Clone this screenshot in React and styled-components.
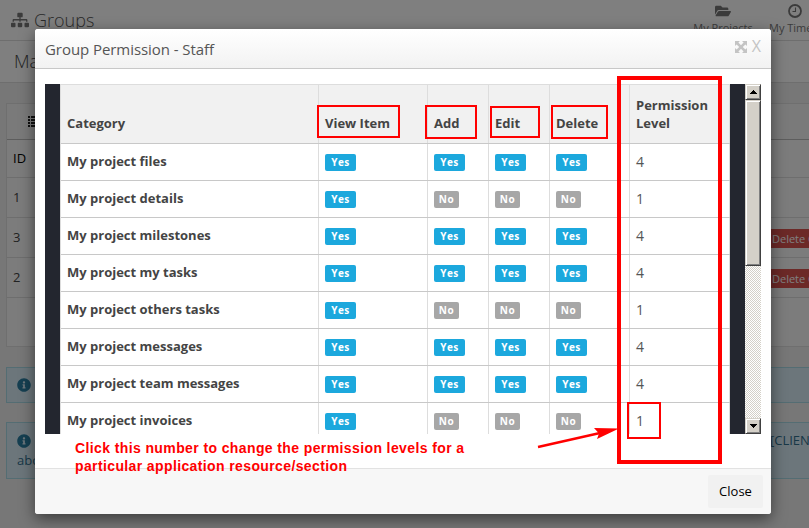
import React from "react";
import styled, { createGlobalStyle } from "styled-components";
import { FaSitemap, FaFolderOpen, FaInfoCircle } from "react-icons/fa";

const Global = createGlobalStyle`
  * { box-sizing: border-box; }
  html, body { margin: 0; overflow: hidden; }
  body { font: 13px/18px "Open Sans", sans-serif; color: #444; }
`;

const Screen = styled.div`
  position: relative;
  width: 809px;
  height: 528px;
  overflow: hidden;
  background: #efefef;
`;

const TopBar = styled.header`
  height: 41px;
  display: flex;
  justify-content: space-between;
  background: #fff;
  border-bottom: 1px solid #dcdcdc;
`;

const PageTitle = styled.div`
  display: flex;
  align-items: center;
  gap: 5px;
  padding-left: 11px;
  font-size: 18px;
  font-weight: 300;
  line-height: 41px;
  color: #555;
  svg { font-size: 18px; fill: #777; }
`;

const Shortcuts = styled.nav`
  display: flex;
  width: 115px;
  gap: 17px;
`;

const Shortcut = styled.div`
  flex: none;
  width: ${(p) => (p.$clock ? 50 : 58)}px;
  display: flex;
  flex-direction: column;
  align-items: ${(p) => (p.$clock ? "flex-start" : "center")};
  padding-top: ${(p) => (p.$clock ? 4 : 3)}px;
  font-size: 11px;
  line-height: 14px;
  color: #777;
  white-space: nowrap;
  svg {
    flex: none;
    font-size: 16px;
    margin: 0 0 ${(p) => (p.$clock ? 3 : 2)}px ${(p) => (p.$clock ? 19 : 0)}px;
  }
`;

const SubBar = styled.div`
  height: 42px;
  padding-left: 14px;
  font-size: 18px;
  font-weight: 300;
  line-height: 41px;
  background: #fff;
  border-bottom: 1px solid #dcdcdc;
`;

const Panel = styled.section`
  margin: 20px 0 0 6px;
  height: 244px;
  background: #f8f8f8;
  border: 1px solid #dedede;
  border-right: 0;
`;

const PanelHead = styled.div`
  height: 36px;
  padding: 12px 0 0 21px;
  line-height: 0;
  background: #f5f5f5;
  border-bottom: 1px solid #bbb;
`;

const PanelRow = styled.div`
  display: flex;
  align-items: center;
  justify-content: space-between;
  height: ${(p) => (p.$head ? 38 : 40)}px;
  padding: 0 0 2px 6px;
  border-bottom: 1px solid #dcdcdc;
  color: ${(p) => (p.$head ? "#000" : "#444")};
`;

const DeleteTag = styled.span`
  width: 40px;
  height: 19px;
  margin-top: 4px;
  padding-left: 3px;
  overflow: hidden;
  font-size: 11px;
  line-height: 19px;
  white-space: nowrap;
  color: #fff;
  background: #d9534f;
`;

const Alert = styled.div`
  display: flex;
  justify-content: space-between;
  margin: ${(p) => (p.$tall ? 19 : 20)}px 0 0 6px;
  height: ${(p) => (p.$tall ? 57 : 36)}px;
  padding: ${(p) => (p.$tall ? 9 : 8)}px 0 0 10px;
  color: #31708f;
  background: #d9edf7;
  border: 1px solid #a9dbe6;
  border-right: 0;
`;

const AlertLead = styled.div`
  display: flex;
  flex-direction: column;
  gap: 2px;
  svg { font-size: 14px; margin: 2px 0 1px; fill: #2a7fa3; }
`;

const AlertTail = styled.span`
  width: 39px;
  margin-top: -1px;
  white-space: nowrap;
`;

const Overlay = styled.div`
  position: absolute;
  inset: 0;
  padding: 29px 0 0 35px;
  background: rgba(0, 0, 0, 0.5);
`;

const Dialog = styled.div`
  display: flex;
  flex-direction: column;
  width: 736px;
  height: 485px;
  overflow: hidden;
  background: #fff;
  border-radius: 3px;
  box-shadow: 0 5px 15px rgba(0, 0, 0, 0.5);
`;

const DialogHead = styled.div`
  display: flex;
  justify-content: space-between;
  height: 40px;
  padding: 0 10px;
  line-height: 41px;
  background: linear-gradient(#fff, #f2f2f2);
  border-bottom: 1px solid #c8c8c8;
`;

const DialogTitle = styled.div`
  font-size: 15px;
  letter-spacing: -0.06px;
  font-weight: 400;
  color: #555;
`;

const WindowTools = styled.div`
  display: flex;
  gap: 5px;
  color: #c4c4c4;
  font-size: 16px;
  line-height: 35px;
  svg { margin: 12px 0 0 -1px; }
`;

const DialogBody = styled.div`
  flex: 1;
  padding: 15px 10px 0;
`;

const Scroller = styled.div`
  display: flex;
  width: 716px;
  height: 350px;
  overflow: hidden;
  background: #23262f;
  padding-left: 15px;
`;

const Grid = styled.div`
  width: 670px;
  margin-right: 15px;
  background: #fff;
  border-left: 1px solid #ddd;
`;

const GridRow = styled.div`
  display: grid;
  grid-template-columns: 258px 109px 61px 61px 80px 100px;
  height: ${(p) => (p.$head ? 60 : 37)}px;
  background: ${(p) => (p.$head ? "#f1f1f1" : "#fff")};
  border-top: ${(p) => (p.$head ? "1px solid #ddd" : "0")};
  border-bottom: 1px solid #c8c8c8;
`;

const Cell = styled.div`
  display: flex;
  align-items: ${(p) => (p.$head ? "flex-end" : "center")};
  padding: ${(p) => (p.$head ? "0 6px 11px" : p.$level ? "0 6px 1px" : "0 6px 3px")};
  font-weight: ${(p) => (p.$strong ? 700 : 400)};
  font-size: ${(p) => (p.$level ? 14 : 13)}px;
  color: ${(p) => (p.$level ? "#555" : "#444")};
  border-right: 1px solid #ddd;
`;

const Badge = styled.span`
  height: 17px;
  min-width: ${(p) => (p.$on ? 31 : 25)}px;
  margin-top: 4px;
  text-align: center;
  border-radius: 2px;
  font: 700 10px/17px "Open Sans", sans-serif;
  letter-spacing: 0.5px;
  color: #fff;
  background: ${(p) => (p.$on ? "#1ca8dd" : "#a7a7a7")};
`;

const ScrollTrack = styled.div`
  display: flex;
  flex-direction: column;
  width: 16px;
  background: repeating-conic-gradient(#d4d0c8 0 25%, #fff 0 50%) 0 0 / 2px 2px;
`;

const ScrollPart = styled.div`
  display: flex;
  align-items: center;
  justify-content: center;
  height: ${(p) => p.$h}px;
  margin-top: ${(p) => (p.$end ? "auto" : 0)};
  background: #d4d0c8;
  border: 1px solid;
  border-color: #d4d0c8 #404040 #404040 #d4d0c8;
  box-shadow: inset 1px 1px #fff, inset -1px -1px #808080;
`;

const DialogFoot = styled.div`
  display: flex;
  justify-content: flex-end;
  height: 46px;
  padding: 6px 8px 0;
  background: #f7f7f7;
  border-top: 1px solid #e2e2e2;
`;

const CloseButton = styled.button`
  width: 55px;
  height: 33px;
  padding: 0 0 1px;
  border: 0;
  border-radius: 2px;
  font: 13px "Open Sans", sans-serif;
  color: #000;
  background: #f1f1f1;
`;

const Mark = styled.div`
  position: absolute;
  left: ${(p) => p.$x}px;
  top: ${(p) => p.$y}px;
  width: ${(p) => p.$w}px;
  height: ${(p) => p.$h}px;
  border: ${(p) => p.$line || 2}px solid #f00;
`;

const Note = styled.div`
  position: absolute;
  left: 75px;
  top: 439px;
  font: 700 14px/18px "Liberation Sans", sans-serif;
  white-space: nowrap;
  color: #f00;
`;

const NoteLine = styled.div`
  letter-spacing: ${(p) => p.$track}px;
`;

const Arrow = styled.svg`
  position: absolute;
  left: 530px;
  top: 420px;
`;

const ListIcon = () => (
  <svg width="13" height="12" fill="#222">
    {[0, 3, 6, 9].map((y) => (
      <g key={y}>
        <rect y={y} width="2" height="2" />
        <rect x="3" y={y} width="9" height="2" />
      </g>
    ))}
  </svg>
);

const ClockIcon = () => (
  <svg width="14" height="14" viewBox="0 0 14 14" fill="none" stroke="currentColor">
    <circle cx="7" cy="7" r="6" strokeWidth="1.8" />
    <path d="M7.5 3.5v4h-3" strokeWidth="1.1" />
  </svg>
);

const ExpandIcon = () => (
  <svg width="12" height="12" viewBox="0 0 12 12" fill="currentColor">
    <path d="M0 0h5L3.4 1.6 6 4.2 8.6 1.6 7 0h5v5l-1.6-1.6L7.8 6l2.6 2.6L12 7v5H7l1.6-1.6L6 7.8l-2.6 2.6L5 12H0V7l1.6 1.6L4.2 6 1.6 3.4 0 5z" />
  </svg>
);

const Triangle = ({ down }) => (
  <svg width="7" height="4" shapeRendering="crispEdges">
    <path d={down ? "M0 0h7v1h-1v1h-1v1h-1v1h-1v-1h-1v-1h-1v-1h-1z" : "M3 0h1v1h1v1h1v1h1v1h-7v-1h1v-1h1v-1h1z"} />
  </svg>
);

const rows = [
  ["My project files", true, 4],
  ["My project details", false, 1],
  ["My project milestones", true, 4],
  ["My project my tasks", true, 4],
  ["My project others tasks", false, 1],
  ["My project messages", true, 4],
  ["My project team messages", true, 4],
  ["My project invoices", false, 1],
];

const YesNo = ({ on }) => (
  <Cell>
    <Badge $on={on}>{on ? "Yes" : "No"}</Badge>
  </Cell>
);

const PermissionTable = () => (
  <Grid>
    <GridRow $head>
      {["Category", "View Item", "Add", "Edit", "Delete", "Permission Level"].map((h) => (
        <Cell key={h} $head $strong>{h}</Cell>
      ))}
    </GridRow>
    {rows.map(([name, edit, level]) => (
      <GridRow key={name}>
        <Cell $strong>{name}</Cell>
        <YesNo on />
        <YesNo on={edit} />
        <YesNo on={edit} />
        <YesNo on={edit} />
        <Cell $level>{level}</Cell>
      </GridRow>
    ))}
  </Grid>
);

export default function App() {
  return (
    <Screen>
      <Global />
      <TopBar>
        <PageTitle><FaSitemap />Groups</PageTitle>
        <Shortcuts>
          <Shortcut><FaFolderOpen />My Projects</Shortcut>
          <Shortcut $clock><ClockIcon />My Time</Shortcut>
        </Shortcuts>
      </TopBar>
      <SubBar>Ma</SubBar>
      <Panel>
        <PanelHead><ListIcon /></PanelHead>
        <PanelRow $head>ID</PanelRow>
        <PanelRow>1</PanelRow>
        <PanelRow>3<DeleteTag>Delete G</DeleteTag></PanelRow>
        <PanelRow>2<DeleteTag>Delete G</DeleteTag></PanelRow>
      </Panel>
      <Alert><AlertLead><FaInfoCircle /></AlertLead></Alert>
      <Alert $tall>
        <AlertLead><FaInfoCircle /><span>abo</span></AlertLead>
        <AlertTail>[CLIEN</AlertTail>
      </Alert>

      <Overlay>
        <Dialog>
          <DialogHead>
            <DialogTitle>Group Permission - Staff</DialogTitle>
            <WindowTools><ExpandIcon /><span>X</span></WindowTools>
          </DialogHead>
          <DialogBody>
            <Scroller>
              <PermissionTable />
              <ScrollTrack>
                <ScrollPart $h={16}><Triangle /></ScrollPart>
                <ScrollPart $h={166} />
                <ScrollPart $h={16} $end><Triangle down /></ScrollPart>
              </ScrollTrack>
            </Scroller>
          </DialogBody>
          <DialogFoot><CloseButton>Close</CloseButton></DialogFoot>
        </Dialog>
      </Overlay>

      <Mark $x={317} $y={105} $w={83} $h={33} />
      <Mark $x={425} $y={105} $w={52} $h={34} />
      <Mark $x={490} $y={106} $w={50} $h={32} />
      <Mark $x={551} $y={105} $w={57} $h={34} />
      <Mark $x={617} $y={76} $w={105} $h={388} $line={4} />
      <Mark $x={627} $y={402} $w={34} $h={37} />
      <Note>
        <NoteLine $track={0.39}>Click this number to change the permission levels for a</NoteLine>
        <NoteLine $track={0.38}>particular application resource/section</NoteLine>
      </Note>
      <Arrow width="90" height="30">
        <path d="M8 27L70 13" stroke="#f00" strokeWidth="2.4" />
        <path d="M64 8L89 8.5L67 19L69 13.5z" fill="#f00" />
      </Arrow>
    </Screen>
  );
}
